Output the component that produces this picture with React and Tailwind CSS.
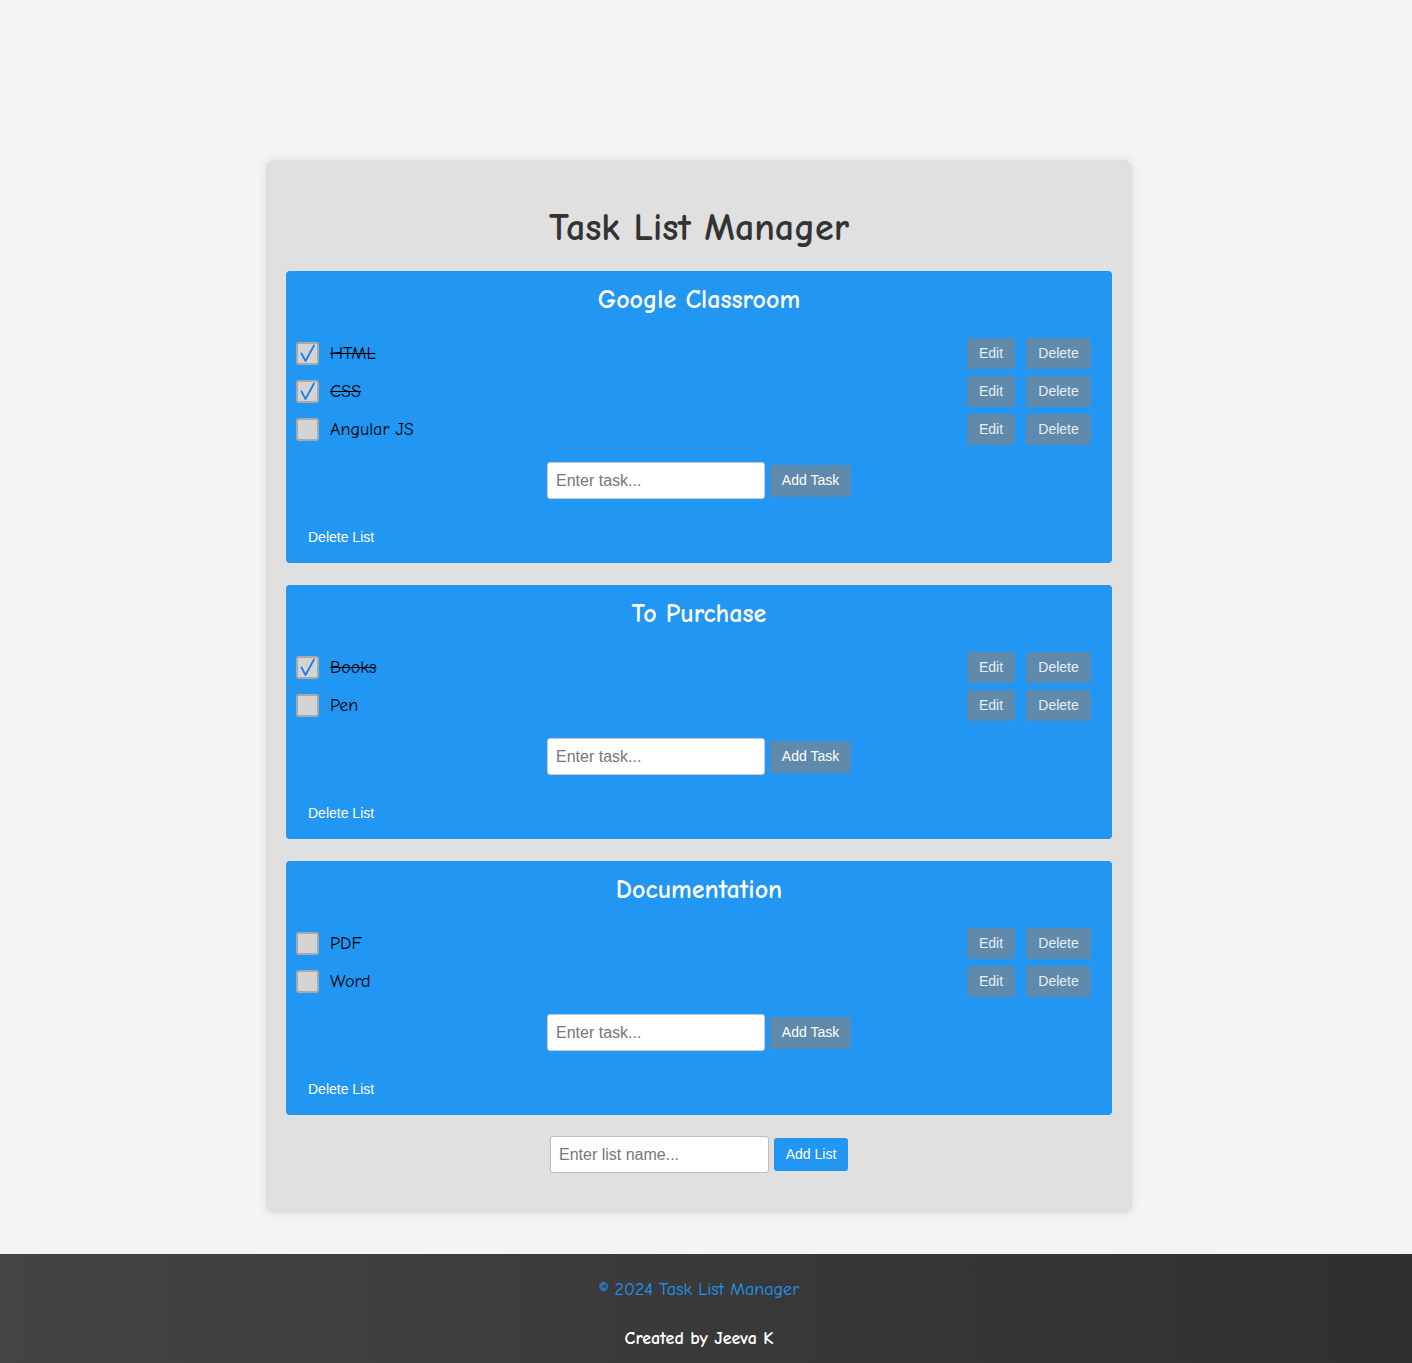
import React, { useState } from 'react';

const comic = { fontFamily: '"Comic Sans MS", "Comic Neue", "Noto Sans", sans-serif' };
const arial = { fontFamily: '"Liberation Sans", Arial, sans-serif' };

const initialLists = [
    {
        id: 1,
        name: 'Google Classroom',
        tasks: [
            { id: 1, text: 'HTML', done: true },
            { id: 2, text: 'CSS', done: true },
            { id: 3, text: 'Angular JS', done: false },
        ],
    },
    {
        id: 2,
        name: 'To Purchase',
        tasks: [
            { id: 1, text: 'Books', done: true },
            { id: 2, text: 'Pen', done: false },
        ],
    },
    {
        id: 3,
        name: 'Documentation',
        tasks: [
            { id: 1, text: 'PDF', done: false },
            { id: 2, text: 'Word', done: false },
        ],
    },
];

function Checkbox({ checked, onChange }) {
    return (
        <button
            type="button"
            onClick={onChange}
            className="w-[23px] h-[23px] shrink-0 rounded-[3px] bg-[#d4d4d4] border-2 border-[#a9a9a9] flex items-center justify-center"
        >
            {checked && (
                <svg width="17" height="19" viewBox="0 0 17 19" fill="none">
                    <path d="M2.5 9.5 L6.5 17 L15 1.5" stroke="#1e7cf0" strokeWidth="1.8" strokeLinecap="round" strokeLinejoin="round" />
                </svg>
            )}
        </button>
    );
}

function TaskList({ list, onToggle, onDeleteTask, onAddTask, onDeleteList }) {
    const [value, setValue] = useState('');

    return (
        <div className="bg-[#2196f3] rounded-[4px] p-[10px]">
            <h2 style={comic} className="h-[38px] leading-[38px] text-center text-white text-[26px] font-bold">
                {list.name}
            </h2>

            <ul className="mt-[15px]">
                {list.tasks.map(task => (
                    <li key={task.id} className="h-[38px] flex items-center pr-[11px]">
                        <Checkbox checked={task.done} onChange={() => onToggle(list.id, task.id)} />
                        <span
                            style={comic}
                            className={`ml-[11px] text-[18px] text-black flex-1 ${task.done ? 'line-through' : ''}`}
                        >
                            {task.text}
                        </span>
                        <button style={arial} className="h-[31px] w-[48px] rounded-[3px] bg-[#5f8aab] text-[#e8eef4] text-[14px]">
                            Edit
                        </button>
                        <button
                            style={arial}
                            onClick={() => onDeleteTask(list.id, task.id)}
                            className="ml-[11px] h-[31px] w-[65px] rounded-[3px] bg-[#5f8aab] text-[#e8eef4] text-[14px]"
                        >
                            Delete
                        </button>
                    </li>
                ))}
            </ul>

            <div className="mt-[14px] flex items-center justify-center gap-[5px]">
                <input
                    style={arial}
                    value={value}
                    onChange={e => setValue(e.target.value)}
                    placeholder="Enter task..."
                    className="w-[218px] h-[37px] bg-white border border-[#c8c8c8] rounded-[3px] px-[8px] text-[16px] text-black placeholder:text-[#777] outline-none"
                />
                <button
                    style={arial}
                    onClick={() => { if (value.trim()) { onAddTask(list.id, value.trim()); setValue(''); } }}
                    className="w-[81px] h-[32px] rounded-[3px] bg-[#5f8aab] text-white text-[14px]"
                >
                    Add Task
                </button>
            </div>

            <div className="mt-[22px] h-[32px] flex items-center">
                <button style={arial} onClick={() => onDeleteList(list.id)} className="px-[12px] h-[32px] text-white text-[14px]">
                    Delete List
                </button>
            </div>
        </div>
    );
}

export default function App() {
    const [lists, setLists] = useState(initialLists);
    const [listName, setListName] = useState('');

    const toggleTask = (listId, taskId) =>
        setLists(ls => ls.map(l => l.id !== listId ? l : {
            ...l, tasks: l.tasks.map(t => t.id === taskId ? { ...t, done: !t.done } : t),
        }));
    const deleteTask = (listId, taskId) =>
        setLists(ls => ls.map(l => l.id !== listId ? l : { ...l, tasks: l.tasks.filter(t => t.id !== taskId) }));
    const addTask = (listId, text) =>
        setLists(ls => ls.map(l => l.id !== listId ? l : { ...l, tasks: [...l.tasks, { id: Date.now(), text, done: false }] }));
    const deleteList = listId => setLists(ls => ls.filter(l => l.id !== listId));
    const addList = () => {
        if (!listName.trim()) return;
        setLists(ls => [...ls, { id: Date.now(), name: listName.trim(), tasks: [] }]);
        setListName('');
    };

    return (
        <div className="min-h-screen bg-[#f4f4f4] flex flex-col">
            <div className="pt-[160px] pb-[41px] pr-[14px] flex justify-center">
                <div className="w-[866px] bg-[#e0e0e0] rounded-[8px] shadow-[0_0_10px_rgba(0,0,0,0.1)] px-[20px] pt-[20px] pb-[40px]">
                    <h1 style={comic} className="mt-[24px] mb-[19px] h-[48px] leading-[48px] text-center text-[38px] font-bold text-[#333]">
                        Task List Manager
                    </h1>

                    <div className="flex flex-col gap-[22px]">
                        {lists.map(list => (
                            <TaskList
                                key={list.id}
                                list={list}
                                onToggle={toggleTask}
                                onDeleteTask={deleteTask}
                                onAddTask={addTask}
                                onDeleteList={deleteList}
                            />
                        ))}
                    </div>

                    <div className="mt-[21px] flex items-center justify-center gap-[5px]">
                        <input
                            style={arial}
                            value={listName}
                            onChange={e => setListName(e.target.value)}
                            placeholder="Enter list name..."
                            className="w-[219px] h-[37px] bg-white border border-[#bdbdbd] rounded-[3px] px-[8px] text-[16px] text-black placeholder:text-[#777] outline-none"
                        />
                        <button style={arial} onClick={addList} className="w-[74px] h-[33px] rounded-[3px] bg-[#2196f3] text-white text-[14px]">
                            Add List
                        </button>
                    </div>
                </div>
            </div>

            <footer style={comic} className="h-[110px] pr-[14px] bg-gradient-to-r from-[#444] to-[#2f2f2f] flex flex-col items-center">
                <p className="mt-[23px] text-[#2196f3] text-[18px] leading-[26px]">© 2024 Task List Manager</p>
                <p className="mt-[23px] text-white text-[18px] leading-[26px] font-bold">Created by Jeeva K</p>
            </footer>
        </div>
    );
}
